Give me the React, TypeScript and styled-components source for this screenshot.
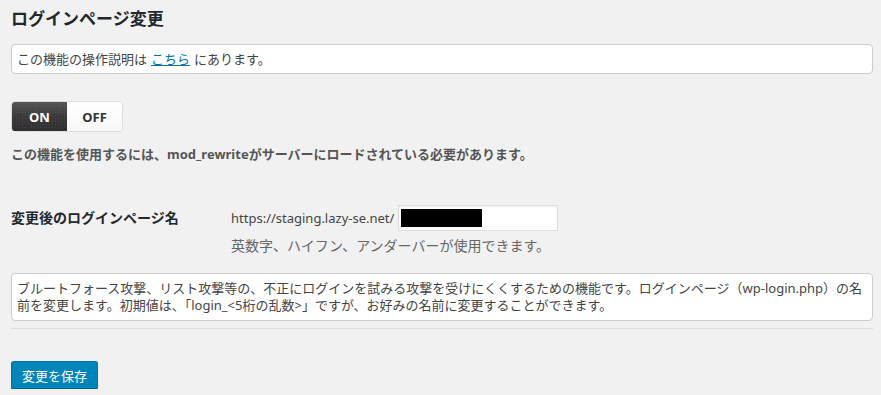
import styled, { createGlobalStyle } from 'styled-components';

const GlobalStyle = createGlobalStyle`
  html, body {
    margin: 0;
    padding: 0;
    background: #f1f1f1;
  }
  body {
    font-family: "Noto Sans", "Noto Sans CJK JP", sans-serif;
    font-size: 13px;
    color: #444;
  }
`;

const Wrap = styled.div`
  padding: 0 8px 0 11px;
`;

const Title = styled.h3`
  margin: 0;
  padding-top: 7px;
  height: 44px;
  box-sizing: border-box;
  font-size: 17px;
  font-weight: 700;
  color: #23282d;
  line-height: 24px;
`;

const NoteBox = styled.div`
  background: #fff;
  border: 1px solid #ccc;
  border-radius: 4px;
  padding: 5px 5px 4px;
  line-height: 19px;
`;

const Link = styled.a`
  color: #0073aa;
  text-decoration: underline;
  margin: 0 4px;
`;

const Toggle = styled.div`
  display: inline-flex;
  margin-top: 27px;
  border: 1px solid #ddd;
  border-radius: 4px;
  overflow: hidden;
`;

const ToggleItem = styled.span<{ $active?: boolean }>`
  width: 55px;
  height: 29px;
  display: flex;
  align-items: center;
  justify-content: center;
  font-size: 13px;
  font-weight: 700;
  color: ${(p) => (p.$active ? '#fff' : '#333')};
  background: ${(p) =>
    p.$active
      ? 'radial-gradient(rgba(255,255,255,0.08) 0.6px, transparent 0.8px) 0 0 / 3px 3px, linear-gradient(to bottom, #555 0%, #3a3a3a 50%, #2e2e2e 100%)'
      : 'linear-gradient(to bottom, #fff 0%, #f7f7f7 100%)'};
`;

const Notice = styled.p`
  margin: 12px 0 0;
  font-weight: 700;
  color: #555;
  line-height: 20px;
`;

const FormRow = styled.div`
  display: grid;
  grid-template-columns: 220px 1fr;
  margin-top: 41px;
`;

const Label = styled.div`
  font-size: 14px;
  font-weight: 700;
  color: #23282d;
  line-height: 26px;
`;

const Field = styled.div`
  display: flex;
  flex-direction: column;
`;

const InputLine = styled.div`
  display: flex;
  align-items: center;
  font-size: 13px;
  color: #444;
`;

const FakeInput = styled.div`
  width: 160px;
  height: 26px;
  box-sizing: border-box;
  margin-left: 4px;
  background: #fff;
  border: 1px solid #ddd;
  box-shadow: inset 0 1px 2px rgba(0, 0, 0, 0.07);
  display: flex;
  align-items: center;
  padding-left: 2px;
`;

const Redacted = styled.span`
  width: 81px;
  height: 18px;
  background: #000;
`;

const Help = styled.p`
  margin: 5px 0 0;
  font-size: 14px;
  color: #666;
  line-height: 20px;
`;

const DescBox = styled(NoteBox)`
  margin-top: 17px;
  padding: 6px 5px;
  line-height: 17px;
  height: 48px;
  box-sizing: border-box;
`;

const Divider = styled.hr`
  margin: 7px 0 0;
  border: 0;
  border-top: 1px solid #ddd;
`;

const SaveButton = styled.button`
  margin-top: 32px;
  height: 28px;
  padding: 0 10px;
  background: #0085ba;
  border: 1px solid #0073aa;
  border-bottom-color: #006799;
  border-radius: 3px;
  box-shadow: 0 1px 0 #006799;
  color: #fff;
  font-family: "Noto Sans", "Noto Sans CJK JP", sans-serif;
  font-size: 13px;
  cursor: pointer;
`;

export default function App() {
  return (
    <>
      <GlobalStyle />
      <Wrap>
        <Title>ログインページ変更</Title>
        <NoteBox>
          この機能の操作説明は<Link href="#">こちら</Link>にあります。
        </NoteBox>
        <Toggle>
          <ToggleItem $active>ON</ToggleItem>
          <ToggleItem>OFF</ToggleItem>
        </Toggle>
        <Notice>この機能を使用するには、mod_rewriteがサーバーにロードされている必要があります。</Notice>
        <FormRow>
          <Label>変更後のログインページ名</Label>
          <Field>
            <InputLine>
              https://staging.lazy-se.net/
              <FakeInput>
                <Redacted />
              </FakeInput>
            </InputLine>
            <Help>英数字、ハイフン、アンダーバーが使用できます。</Help>
          </Field>
        </FormRow>
        <DescBox>
          ブルートフォース攻撃、リスト攻撃等の、不正にログインを試みる攻撃を受けにくくするための機能です。ログインページ（wp-login.php）の名前を変更します。初期値は、「login_&lt;5桁の乱数&gt;」ですが、お好みの名前に変更することができます。
        </DescBox>
        <Divider />
        <SaveButton>変更を保存</SaveButton>
      </Wrap>
    </>
  );
}
